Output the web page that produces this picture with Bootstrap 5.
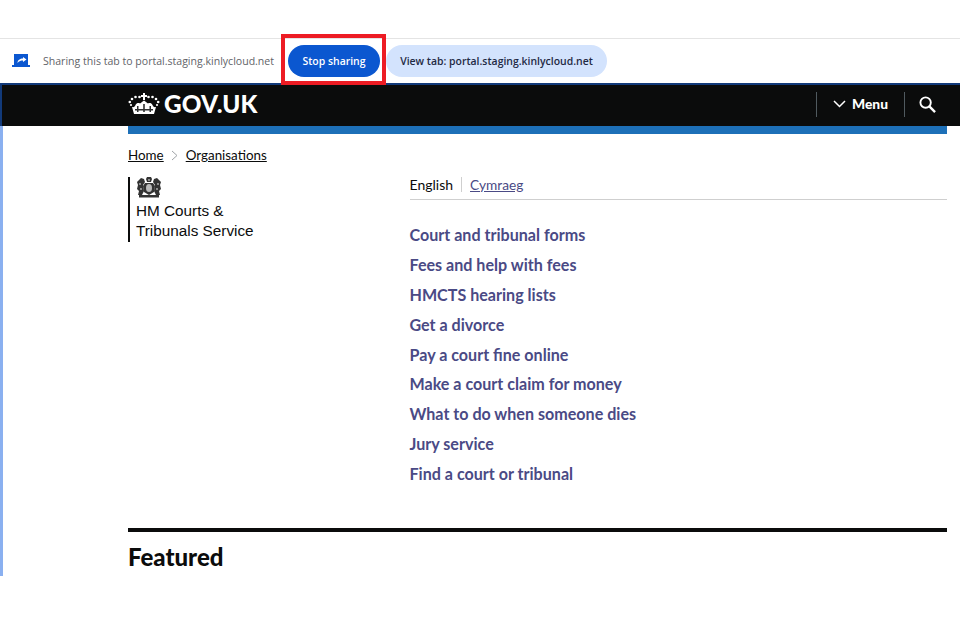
<!DOCTYPE html>
<html lang="en">
<head>
    <meta charset="UTF-8">
    <meta name="viewport" content="width=device-width, initial-scale=1.0">
    <title>GOV.UK - HM Courts &amp; Tribunals Service</title>
    <link href="https://cdn.jsdelivr.net/npm/bootstrap@5.3.0/dist/css/bootstrap.min.css" rel="stylesheet">
    <style>
        body {
            width: 960px;
            height: 640px;
            overflow: hidden;
            background: #fff;
            font-family: "Lato", "Liberation Sans", sans-serif;
            color: #0b0c0c;
        }
        .top-gap { height: 38px; border-bottom: 1px solid #e4e4e4; box-sizing: content-box; }
        .share-bar {
            height: 44px;
            padding-left: 12px;
            font-family: "Open Sans", "Noto Sans", sans-serif;
            font-size: 10.55px;
            position: relative;
        }
        .share-text { color: #5f6368; margin-left: 13px; width: 245px; padding-top: 2px; white-space: nowrap; }
        .pill {
            height: 32px;
            border-radius: 16px;
            padding-top: 2px;
            font-weight: 600;
            font-size: 10.45px;
            white-space: nowrap;
        }
        .pill-stop { width: 92px; background: #0b57d0; color: #fff; margin-right: 6px; }
        .pill-view { width: 221px; background: #d3e3fd; color: #1f2a44; }
        .red-box {
            position: absolute;
            left: 281px;
            top: -5px;
            width: 105px;
            height: 51px;
            border: 4px solid #ed1c24;
        }
        .frame {
            height: 493px;
            border-left: 3px solid #8ab0f0;
        }
        .gov-head {
            height: 43px;
            margin-left: -3px;
            padding-left: 126px;
            padding-right: 24px;
            padding-bottom: 2px;
            background: #0b0c0c;
            border-top: 2px solid #123a7a;
            border-left: 2px solid #123a7a;
            color: #fff;
        }
        .gov-word { font-size: 24.3px; font-weight: 900; margin-left: 4px; letter-spacing: .2px; line-height: 1; }
        .gov-menu {
            height: 25px;
            padding-bottom: 1px;
            border-left: 1px solid #505a5f;
            border-right: 1px solid #505a5f;
            width: 89px;
            font-size: 13.8px;
            font-weight: 900;
            gap: 6px;
            margin-right: 14px;
        }
        .page-body { margin-left: 125px; width: 819px; }
        .blue-strip { height: 8px; background: #1d70b8; }
        .crumbs { font-size: 13.4px; line-height: 18px; margin-top: 12px; gap: 7px; }
        .crumbs a { color: #0b0c0c; }
        .org-col { width: 281.5px; flex: none; }
        .org-logo {
            width: 160px;
            height: 65px;
            margin-top: 13px;
            padding-left: 6px;
            border-left: 2px solid #0b0c0c;
            font-family: "Liberation Sans", sans-serif;
            font-size: 15.3px;
            line-height: 20px;
        }
        .org-logo svg { margin-bottom: 3px; }
        .main-col { flex: 1; margin-top: 13px; }
        .lang-row { height: 23px; border-bottom: 1px solid #cfcfcf; font-size: 14px; line-height: 17px; }
        .lang-row span { height: 15px; line-height: 15px; padding-right: 8px; border-right: 1px solid #cfcfcf; margin-right: 8px; }
        .lang-row a { color: #4a4a85; font-size: 13.7px; line-height: 15px; height: 15px; }
        .quick-links { margin-top: 24px; }
        .quick-links a {
            display: block;
            height: 29.9px;
            line-height: 22px;
            font-size: 16.1px;
            font-weight: 700;
            color: #4a4a85;
            text-decoration: none;
        }
        .featured { margin-top: 35px; border-top: 4px solid #0b0c0c; padding-top: 10px; }
        .featured h2 { font-size: 24px; font-weight: 900; line-height: 30px; margin: 0; color: #0b0c0c; }
    </style>
</head>
<body>
    <div class="top-gap"></div>
    <div class="share-bar d-flex align-items-center">
        <svg width="18" height="14" viewBox="0 0 18 14">
            <path fill="#0b57d0" d="M2 0h14v11H2zM0 11h18v2H0z"/>
            <path fill="#fff" d="M5.500 9c0-3 2.500-4.500 5.500-4.500V3l3.500 2.500L11 8V6.500C9 6.500 7 7 5.500 9z"/>
        </svg>
        <div class="share-text">Sharing this tab to portal.staging.kinlycloud.net</div>
        <div class="pill pill-stop d-flex align-items-center justify-content-center">Stop sharing</div>
        <div class="pill pill-view d-flex align-items-center justify-content-center">View tab: portal.staging.kinlycloud.net</div>
        <div class="red-box"></div>
    </div>
    <div class="frame">
        <div class="gov-head d-flex align-items-center justify-content-between">
            <div class="d-flex align-items-center">
                <svg width="32" height="22" viewBox="0 0 32 22">
                    <g fill="#fff">
                        <path d="M15 0h2v2h2v2h-2v3h-2V4h-2V2h2z"/>
                        <circle cx="1.800" cy="9" r="1.300"/><circle cx="4" cy="6" r="1.300"/><circle cx="7.500" cy="4" r="1.300"/><circle cx="11.500" cy="4" r="1.300"/>
                        <circle cx="20.500" cy="4" r="1.300"/><circle cx="24.500" cy="4" r="1.300"/><circle cx="28" cy="6" r="1.300"/><circle cx="30.200" cy="9" r="1.300"/>
                        <circle cx="3" cy="12" r="1.100"/><circle cx="29" cy="12" r="1.100"/>
                        <path d="M6 21l-2-7c2 .5 3-.5 3.500-2 1-2 3-2.500 4.500-1.500 1.500-.8 2.500-2 4-3 1.500 1 2.500 2.200 4 3 1.500-1 3.500-.5 4.500 1.500.5 1.500 1.500 2.500 3.500 2l-2 7z"/>
                    </g>
                    <g fill="#0b0c0c">
                        <path d="M9 13h1.500v3H13v1.500h-2.500V19H9v-1.500H7V16h2zM15.200 11h1.600v5H19v1.500h-2.200V19h-1.600v-1.500H13V16h2.200zM21.500 13H23v3h2v1.500h-2V19h-1.500v-1.500H19V16h2.500z" opacity=".85"/>
                    </g>
                </svg>
                <span class="gov-word">GOV.UK</span>
            </div>
            <div class="d-flex align-items-center">
                <div class="gov-menu d-flex align-items-center justify-content-center">
                    <svg width="13" height="8" viewBox="0 0 13 8"><path d="M1 1l5.500 5.500L12 1" fill="none" stroke="#fff" stroke-width="1.500"/></svg>
                    Menu
                </div>
                <svg width="17" height="17" viewBox="0 0 18 18"><circle cx="7" cy="7" r="5.500" fill="none" stroke="#fff" stroke-width="2"/><path d="M11 11l6 6" stroke="#fff" stroke-width="2.500"/></svg>
            </div>
        </div>
        <div class="page-body">
            <div class="blue-strip"></div>
            <div class="crumbs d-flex align-items-center">
                <a href="#">Home</a>
                <svg width="8" height="11" viewBox="0 0 8 11"><path d="M1 1l5 4.500L1 10" fill="none" stroke="#a0a4a8" stroke-width="1"/></svg>
                <a href="#">Organisations</a>
            </div>
            <div class="d-flex">
                <div class="org-col">
                    <div class="org-logo">
                        <svg class="d-block" width="26" height="21" viewBox="0 0 26 21">
                            <g fill="#333">
                                <path d="M9 6h8l2 3-1 6-5 3-5-3-1-6z"/>
                                <path d="M11 0h4l1 2-1 3h-4l-1-3z"/>
                                <path d="M5 1l3 1 1 3-2 3 1 6-2 4H2l1-4-2-2 1-4-1-3zM21 1l-3 1-1 3 2 3-1 6 2 4h4l-1-4 2-2-1-4 1-3z"/>
                                <path d="M3 18h20v2.500H3z"/>
                            </g>
                            <g fill="#bbb">
                                <ellipse cx="13" cy="11" rx="3" ry="4"/>
                                <circle cx="4" cy="7" r=".9"/><circle cx="22" cy="7" r=".9"/>
                                <circle cx="5" cy="12" r=".9"/><circle cx="21" cy="12" r=".9"/>
                                <circle cx="13" cy="3" r=".9"/>
                            </g>
                        </svg>
                        HM Courts &amp;<br>Tribunals Service
                    </div>
                </div>
                <div class="main-col">
                    <div class="lang-row d-flex">
                        <span>English</span>
                        <a href="#">Cymraeg</a>
                    </div>
                    <div class="quick-links">
                        <a href="#">Court and tribunal forms</a>
                        <a href="#">Fees and help with fees</a>
                        <a href="#">HMCTS hearing lists</a>
                        <a href="#">Get a divorce</a>
                        <a href="#">Pay a court fine online</a>
                        <a href="#">Make a court claim for money</a>
                        <a href="#">What to do when someone dies</a>
                        <a href="#">Jury service</a>
                        <a href="#">Find a court or tribunal</a>
                    </div>
                </div>
            </div>
            <div class="featured"><h2>Featured</h2></div>
        </div>
    </div>
    <script src="https://cdn.jsdelivr.net/npm/bootstrap@5.3.0/dist/js/bootstrap.bundle.min.js"></script>
</body>
</html>
